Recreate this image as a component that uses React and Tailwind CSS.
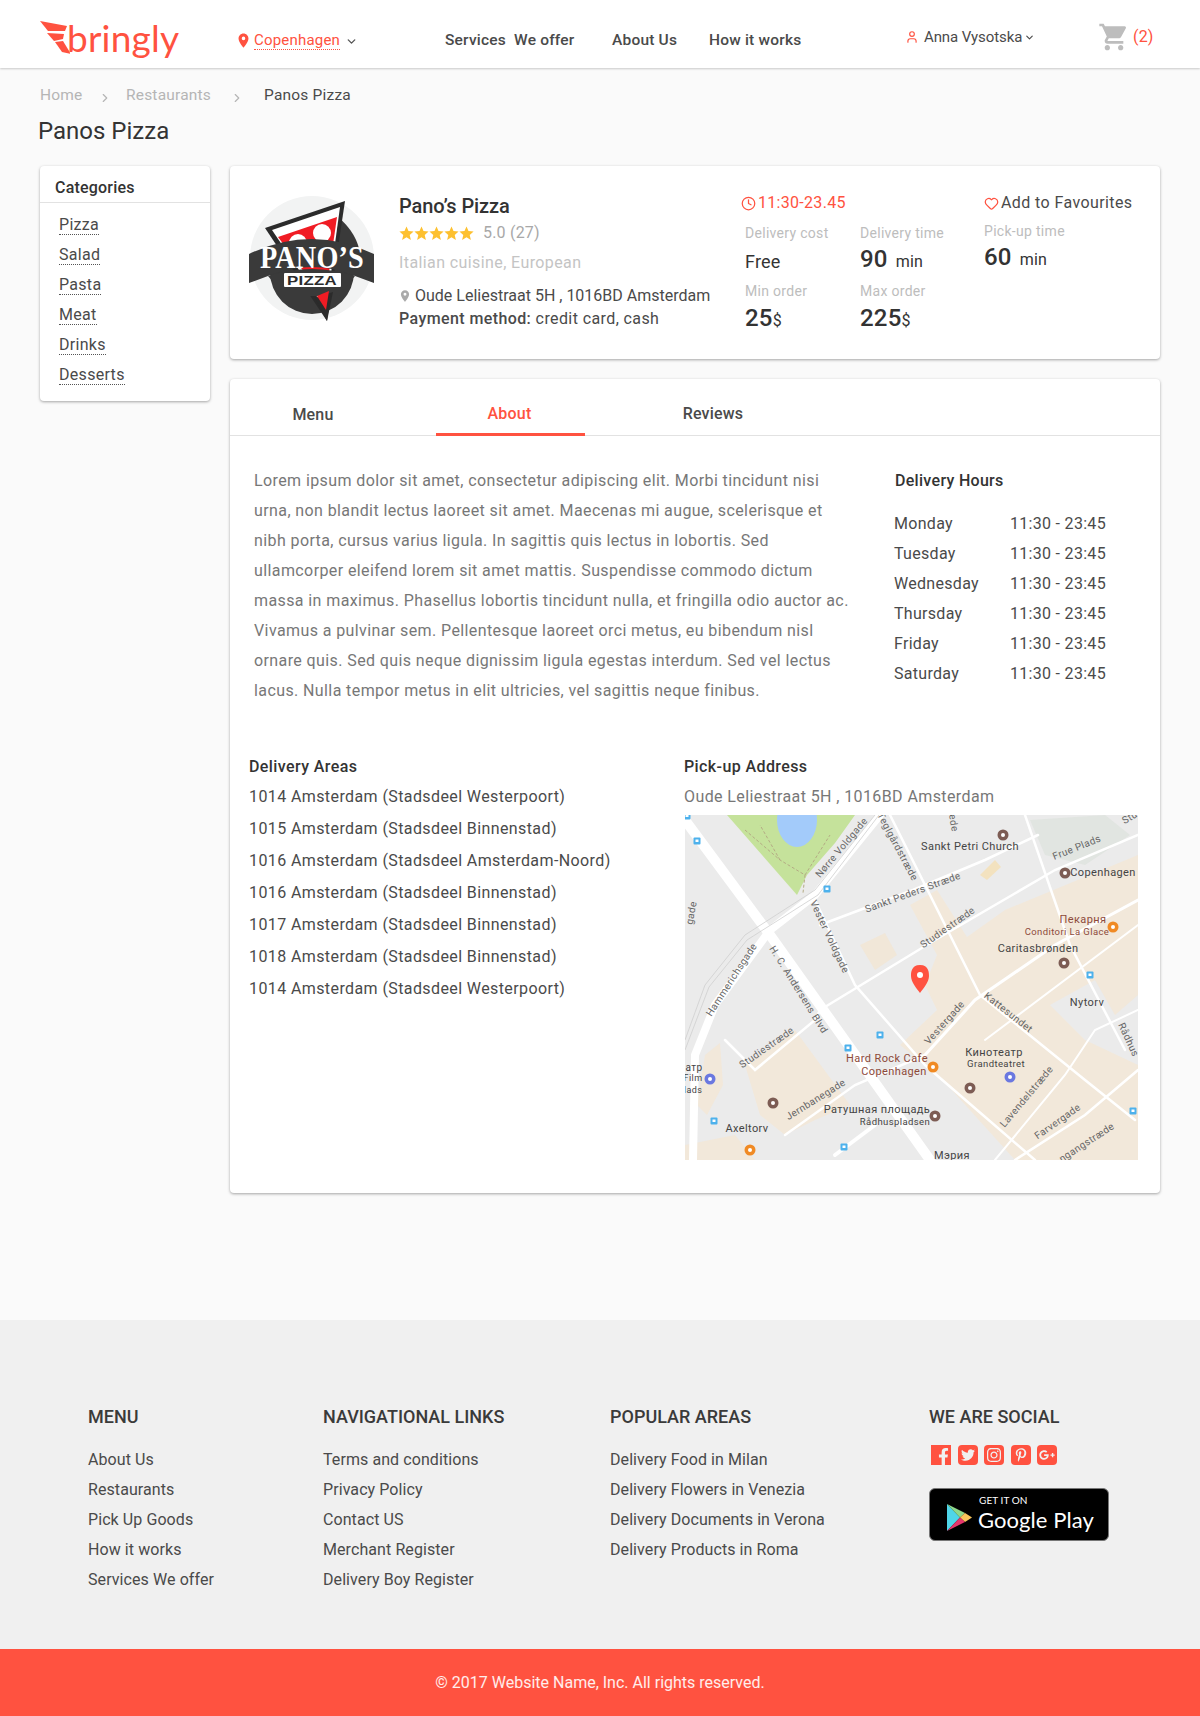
import React from 'react';
import { ChevronDown, ChevronRight, Clock, Heart, User } from 'lucide-react';
import { MdPlace, MdShoppingCart, MdStar } from 'react-icons/md';
import { FaFacebookF, FaTwitter, FaInstagram, FaPinterestP, FaGooglePlusG } from 'react-icons/fa';

const categories = ['Pizza', 'Salad', 'Pasta', 'Meat', 'Drinks', 'Desserts'];

const hours = [
  ['Monday', '11:30 - 23:45'],
  ['Tuesday', '11:30 - 23:45'],
  ['Wednesday', '11:30 - 23:45'],
  ['Thursday', '11:30 - 23:45'],
  ['Friday', '11:30 - 23:45'],
  ['Saturday', '11:30 - 23:45'],
];

const areas = [
  '1014 Amsterdam (Stadsdeel Westerpoort)',
  '1015 Amsterdam (Stadsdeel Binnenstad)',
  '1016 Amsterdam (Stadsdeel Amsterdam-Noord)',
  '1016 Amsterdam (Stadsdeel Binnenstad)',
  '1017 Amsterdam (Stadsdeel Binnenstad)',
  '1018 Amsterdam (Stadsdeel Binnenstad)',
  '1014 Amsterdam (Stadsdeel Westerpoort)',
];

const footerColumns = [
  { title: 'MENU', width: 'w-[235px]', links: ['About Us', 'Restaurants', 'Pick Up Goods', 'How it works', 'Services We offer'] },
  { title: 'NAVIGATIONAL LINKS', width: 'w-[287px]', links: ['Terms and conditions', 'Privacy Policy', 'Contact US', 'Merchant Register', 'Delivery Boy Register'] },
  { title: 'POPULAR AREAS', width: 'w-[319px]', links: ['Delivery Food in Milan', 'Delivery Flowers in Venezia', 'Delivery Documents in Verona', 'Delivery Products in Roma'] },
];

// Logo
function BringlyLogo() {
  return (
    <div className="flex items-center w-[197px] h-[58px] -mt-[2px]">
      <svg width="30" height="40" viewBox="0 0 30 40" className="shrink-0 -mt-1">
        <path d="M0 5 L27 10 L25 15 L8 15 Z" fill="#ff5240" />
        <path d="M7 17 L24 18 L23 23 L14 25 Z" fill="#ff5240" />
        <path d="M15 26 L23 25 L31 38 L22 36 Z" fill="#ff5240" />
      </svg>
      <span className="font-['Lato',sans-serif] text-[37px] leading-none text-[#ff5240] -ml-[3px] -mt-[2px]">bringly</span>
    </div>
  );
}

function PanosLogo() {
  return (
    <svg width="126" height="126" viewBox="0 0 126 126" className="shrink-0">
      <circle cx="63" cy="62" r="62" fill="#f2f3f3" />
      <path d="M88 20 Q118 45 110 80 L60 60 Z" fill="#3a3a3a" />
      <circle cx="63" cy="76" r="42" fill="#3a3a3a" />
      <path d="M96 5 L16 32 L78 125 Z" fill="#2b2b2b" />
      <path d="M91 11 L23 34 L77 114 Z" fill="#fff" />
      <path d="M88 21 L29 41 L76 104 Z" fill="#f01c24" />
      <circle cx="73" cy="37" r="9" fill="#fff" />
      <circle cx="49" cy="47" r="9" fill="#fff" />
      <path d="M0 58 Q63 28 125 58 L125 87 L106 80 Q63 62 19 80 L0 87 Z" fill="#3a3a3a" />
      <path d="M19 80 Q63 66 106 80 L90 100 L36 100 Z" fill="#3a3a3a" />
      <path d="M66 102 L84 96 L78 125 Z" fill="#2b2b2b" />
      <path d="M68 100 L80 95 L77 114 Z" fill="#f01c24" />
      <text x="63" y="72" textAnchor="middle" fontFamily="'Liberation Serif', serif" fontWeight="700" fontSize="31" fill="#fff" textLength="104" lengthAdjust="spacingAndGlyphs">PANO’S</text>
      <rect x="35" y="77" width="57" height="14" rx="1" fill="#fff" />
      <text x="63" y="88.5" textAnchor="middle" fontFamily="'Liberation Sans', sans-serif" fontWeight="700" fontSize="12" fill="#2b2b2b" textLength="50" lengthAdjust="spacingAndGlyphs">PIZZA</text>
    </svg>
  );
}

function Stat({ label, children, offset = 'mt-[2px]' }) {
  return (
    <div>
      <div className="text-sm leading-[18px] tracking-[0.3px] text-[#bdbdbd]">{label}</div>
      <div className={`h-7 flex items-baseline text-[#333] whitespace-nowrap ${offset}`}>{children}</div>
    </div>
  );
}

function MapLabel({ x, y, size = 10, fill = '#666', rotate = 0, children }) {
  return (
    <text
      x={x}
      y={y}
      fontSize={size}
      fill={fill}
      textAnchor="middle"
      dominantBaseline="middle"
      fontFamily="Roboto, sans-serif"
      transform={rotate ? `rotate(${rotate} ${x} ${y})` : undefined}
    >
      {children}
    </text>
  );
}

function MapPicture() {
  const labels = [
    { x: 285, y: 32, t: 'Sankt Petri Church', size: 11, fill: '#444' },
    { x: 418, y: 58, t: 'Copenhagen', size: 11, fill: '#444' },
    { x: 398, y: 105, t: 'Пекарня', size: 11, fill: '#8d4a3a' },
    { x: 382, y: 117, t: 'Conditori La Glace', size: 9.5, fill: '#8d4a3a' },
    { x: 353, y: 134, t: 'Caritasbrønden', size: 11, fill: '#444' },
    { x: 402, y: 188, t: 'Nytorv', size: 11, fill: '#444' },
    { x: 202, y: 244, t: 'Hard Rock Cafe', size: 11, fill: '#8d4a3a' },
    { x: 209, y: 257, t: 'Copenhagen', size: 11, fill: '#8d4a3a' },
    { x: 309, y: 238, t: 'Кинотеатр', size: 11, fill: '#444' },
    { x: 311, y: 249, t: 'Grandteatret', size: 9.5, fill: '#444' },
    { x: 192, y: 295, t: 'Ратушная площадь', size: 11, fill: '#444' },
    { x: 210, y: 307, t: 'Rådhuspladsen', size: 9.5, fill: '#444' },
    { x: 62, y: 314, t: 'Axeltorv', size: 11, fill: '#444' },
    { x: 267, y: 341, t: 'Мэрия', size: 11, fill: '#444' },
    { x: 9, y: 253, t: 'атр', size: 10, fill: '#444' },
    { x: 8, y: 264, t: 'Film', size: 9, fill: '#444' },
    { x: 8, y: 276, t: 'lads', size: 9, fill: '#444' },
    { x: 157, y: 33, t: 'Nørre Voldgade', rotate: -50 },
    { x: 212, y: 32, t: 'Teglgårdstræde', rotate: 62 },
    { x: 228, y: 78, t: 'Sankt Peders Stræde', rotate: -20 },
    { x: 263, y: 113, t: 'Studiestræde', rotate: -35 },
    { x: 392, y: 33, t: 'Frue Plads', rotate: -22 },
    { x: 144, y: 122, t: 'Vester Voldgade', rotate: 65 },
    { x: 113, y: 175, t: 'H. C. Andersens Blvd', rotate: 58 },
    { x: 47, y: 165, t: 'Hammerichsgade', rotate: -57 },
    { x: 260, y: 208, t: 'Vestergade', rotate: -48 },
    { x: 323, y: 198, t: 'Kattesundet', rotate: 38 },
    { x: 82, y: 233, t: 'Studiestræde', rotate: -35 },
    { x: 131, y: 285, t: 'Jernbanegade', rotate: -32 },
    { x: 342, y: 282, t: 'Lavendelstræde', rotate: -50 },
    { x: 373, y: 307, t: 'Farvergade', rotate: -35 },
    { x: 443, y: 225, t: 'Rådhus', rotate: 65 },
    { x: 402, y: 328, t: 'ngangstræde', rotate: -33 },
    { x: 268, y: 8, t: 'ede', rotate: 80 },
    { x: 7, y: 98, t: 'gade', rotate: -80 },
    { x: 445, y: 3, t: 'Stu', rotate: -30 },
  ];
  const stops = [[12, 26], [142, 74], [195, 220], [163, 233], [405, 160], [448, 296], [29, 306], [159, 332], [2, 1]];
  const pois = [
    [318, 20, '#7d5c54'], [380, 58, '#7d5c54'], [428, 112, '#f08a24'], [379, 148, '#7d5c54'],
    [248, 252, '#f08a24'], [325, 262, '#6b78e0'], [285, 273, '#7d5c54'], [250, 301, '#7d5c54'],
    [88, 288, '#7d5c54'], [25, 264, '#6b78e0'], [65, 335, '#f08a24'],
  ];
  return (
    <svg width="453" height="345" viewBox="0 0 453 345" className="block">
      <rect width="453" height="345" fill="#ebebeb" />
      {/* tan blocks */}
      <path d="M225 90 L252 75 L282 122 L320 95 L453 40 L453 345 L330 345 L255 262 L215 230 L252 195 L240 170 L252 140 Z" fill="#f2e8da" />
      <path d="M365 190 L410 165 L430 200 L453 180 L453 250 L400 225 Z" fill="#ebebeb" />
      <path d="M60 250 L110 215 L165 290 L130 305 L100 320 L75 300 Z" fill="#f2e8da" />
      <path d="M20 240 L35 228 L38 270 L22 300 L12 290 Z" fill="#f2e8da" />
      <path d="M0 330 L50 320 L70 345 L0 345 Z" fill="#f2e8da" />
      <path d="M175 130 L200 118 L212 140 L190 155 Z" fill="#f1e7d8" />
      <path d="M345 5 L420 0 L445 20 L400 50 L360 40 Z" fill="#e1e5e1" />
      <path d="M295 60 L310 45 L316 52 L302 65 Z" fill="#f3e2bf" />
      {/* park and lake */}
      <path d="M42 0 L170 0 L150 28 L122 60 L112 80 Z" fill="#c5e29b" />
      <ellipse cx="112" cy="5" rx="20" ry="27" fill="#a3cbfa" />
      <path d="M60 15 L95 45 L120 60 L118 78 M120 60 L145 20 M95 45 L75 10" fill="none" stroke="#b4ab84" strokeWidth="1" strokeDasharray="3 2" />
      {/* roads */}
      <g fill="none" stroke="#fff" strokeLinecap="round">
        <path d="M0 5 L85 120 L245 345" strokeWidth="10" />
        <path d="M195 0 L130 80 L85 115 L30 190 L10 240 L8 345" strokeWidth="8" />
        <path d="M135 110 L228 75 L300 45 L353 20" strokeWidth="2.5" />
        <path d="M135 195 L250 125 L370 55 L453 20" strokeWidth="2.5" />
        <path d="M130 85 L170 170 L240 250 L350 345" strokeWidth="2.5" />
        <path d="M205 0 L295 180 L400 265 L450 305" strokeWidth="2.5" />
        <path d="M240 240 L290 185 L370 130 L453 85" strokeWidth="3" />
        <path d="M340 0 L385 130 L440 235" strokeWidth="2.5" />
        <path d="M300 225 L453 110" strokeWidth="2" />
        <path d="M100 320 L170 270 L240 240" strokeWidth="2.5" />
        <path d="M310 345 L380 260 L410 215 L453 195" strokeWidth="2" />
        <path d="M330 345 L400 300 L453 255" strokeWidth="2.5" />
        <path d="M40 225 L70 255 L130 205 L135 195" strokeWidth="2.5" />
        <path d="M150 340 L190 310" strokeWidth="4" />
      </g>
      <g fill="none" stroke="#cfcfcf" strokeWidth="0.8">
        <path d="M0 225 L20 170 L60 120 L130 75 L190 0" />
        <path d="M0 235 L24 172 L62 125 L133 80 L194 0" />
      </g>
      {stops.map(([x, y], i) => (
        <g key={i}>
          <rect x={x - 3.5} y={y - 3.5} width="7" height="7" rx="1" fill="#4db1ec" />
          <rect x={x - 1.5} y={y - 1.5} width="3" height="2.5" fill="#fff" />
        </g>
      ))}
      {pois.map(([x, y, c], i) => (
        <g key={i}>
          <circle cx={x} cy={y} r="5.5" fill={c} />
          <circle cx={x} cy={y} r="2" fill="#fff" />
        </g>
      ))}
      {labels.map((l, i) => (
        <MapLabel key={i} x={l.x} y={l.y} size={l.size} fill={l.fill} rotate={l.rotate}>{l.t}</MapLabel>
      ))}
      {/* pin */}
      <path d="M235 150 C226 150 226 158 226 161 C226 167 232 174 235 178 C238 174 244 167 244 161 C244 158 244 150 235 150 Z" fill="#ff5240" />
      <circle cx="235" cy="160" r="3" fill="#fff" />
    </svg>
  );
}

function GooglePlayBadge() {
  return (
    <div className="flex items-center w-[180px] h-[53px] bg-black rounded-md border border-[#777] pl-[17px] text-white">
      <svg width="25" height="27" viewBox="0 0 25 27" className="shrink-0 mt-[6px]">
        <path d="M0 0 L13 13.5 L0 27 Z" fill="#4fd5e8" />
        <path d="M0 0 L18 9 L13 13.5 Z" fill="#8ed98a" />
        <path d="M18 9 L25 13.5 L18 18 L13 13.5 Z" fill="#f9c45b" />
        <path d="M0 27 L13 13.5 L18 18 Z" fill="#e5366c" />
      </svg>
      <div className="ml-[6px] -mt-[2px] font-['Lato',sans-serif]">
        <div className="text-[10px] leading-3 ml-[1px]">GET IT ON</div>
        <div className="text-[22px] leading-[27px] whitespace-nowrap">Google Play</div>
      </div>
    </div>
  );
}

function SocialIcon({ children, square }) {
  return (
    <span className={`flex items-center justify-center w-5 h-5 overflow-hidden bg-[#ff5240] text-[#f0f0f0] ${square ? '' : 'rounded-sm'}`}>
      {children}
    </span>
  );
}

export default function App() {
  return (
    <div className="w-[1200px] min-h-[1716px] bg-[#fafafa] font-['Roboto',sans-serif] text-base text-[#4a4a4a] tracking-[0.2px]">
      {/* Header */}
      <header className="flex items-center h-[68px] pl-10 pt-[10px] bg-white shadow-[0_1px_2px_rgba(0,0,0,0.2)]">
        <BringlyLogo />
        <div className="flex items-center w-[208px] text-[#ff5240] mt-[2px]">
          <MdPlace size={17} className="-ml-[2px]" />
          <span className="ml-[2px] text-[15px] leading-[18px] border-b border-dotted border-[#ff5240]">Copenhagen</span>
          <ChevronDown size={13} strokeWidth={2.5} className="ml-[5px] mt-[3px] text-[#555]" />
        </div>
        <nav className="flex items-center mt-[3px] font-medium text-[15.5px] w-[460px]">
          <span className="w-[167px] whitespace-nowrap">Services &nbsp;We offer</span>
          <span className="w-[97px]">About Us</span>
          <span>How it works</span>
        </nav>
        <div className="flex items-center w-[193px] -mt-1 text-[15px]">
          <User size={14} className="text-[#ff5240]" />
          <span className="ml-[5px] tracking-[-0.1px]">Anna Vysotska</span>
          <ChevronDown size={11} strokeWidth={2.5} className="ml-[2px]" />
        </div>
        <div className="flex items-center -mt-1">
          <MdShoppingCart size={32} className="text-[#bdbdbd]" />
          <span className="ml-[3px] text-[#ff5240]">(2)</span>
        </div>
      </header>

      {/* Breadcrumb */}
      <div className="flex items-center h-[56px] pl-10 text-[15.5px]">
        <span className="w-[58px] text-[#b5b5b5]">Home</span>
        <ChevronRight size={14} className="text-[#b5b5b5] mt-[3px]" />
        <span className="ml-[14px] w-[104px] text-[#b5b5b5]">Restaurants</span>
        <ChevronRight size={14} className="text-[#b5b5b5] mt-[3px]" />
        <span className="ml-5">Panos Pizza</span>
      </div>
      <h1 className="pl-[38px] h-[49px] -mt-[7px] text-2xl leading-7 font-normal text-[#333] tracking-normal">Panos Pizza</h1>

      {/* Content */}
      <div className="flex gap-5 px-10">
        <aside className="w-[170px] h-[235px] bg-white shadow-[0_1px_3px_rgba(0,0,0,0.35)] rounded-sm">
          <div className="h-[37px] pl-[15px] pt-[11px] leading-[22px] font-medium text-[#333] border-b border-[#e2e2e2]">Categories</div>
          <ul className="pl-[19px] pt-[7px] tracking-[0.3px]">
            {categories.map((c) => (
              <li key={c} className="h-[30px] flex items-center">
                <span className="leading-[18px] border-b border-dotted border-[#555]">{c}</span>
              </li>
            ))}
          </ul>
        </aside>

        <main className="w-[930px]">
          {/* Restaurant card */}
          <section className="flex h-[193px] bg-white rounded-sm shadow-[0_1px_3px_rgba(0,0,0,0.35)]">
            <div className="pl-[19px] pt-[30px] pr-6">
              <PanosLogo />
            </div>
            <div className="w-[343px] pt-[28px]">
              <h2 className="text-xl leading-6 font-medium text-[#333] tracking-[-0.1px]">Pano’s Pizza</h2>
              <div className="flex items-center h-5 mt-[5px]">
                <span className="flex text-[#fdc02f] -ml-[1px] -space-x-[2px]">
                  {[0, 1, 2, 3, 4].map((i) => <MdStar key={i} size={17} />)}
                </span>
                <span className="ml-2 text-[#a8a8a8]">5.0 (27)</span>
              </div>
              <div className="h-5 leading-5 mt-[10px] text-[#c4c4c4] tracking-[0.4px]">Italian cuisine, European</div>
              <div className="flex items-center h-5 mt-[13px] whitespace-nowrap tracking-normal">
                <MdPlace size={14} className="text-[#aaa] -ml-[1px]" />
                <span className="ml-[3px]">Oude Leliestraat 5H , 1016BD Amsterdam</span>
              </div>
              <div className="h-5 leading-5 mt-[3px] whitespace-nowrap tracking-[0.4px]">
                <span className="font-medium">Payment method:</span> credit card, cash
              </div>
            </div>
            <div className="w-[242px] pt-[27px]">
              <div className="flex items-center h-5 text-[#ff5240] -ml-[1px] tracking-[0.3px]">
                <Clock size={15} strokeWidth={2} />
                <span className="ml-[2px]">11:30-23.45</span>
              </div>
              <div className="grid grid-cols-[115px_115px] gap-y-[6px] mt-[11px] ml-[3px]">
                <Stat label="Delivery cost" offset="mt-[6px]"><span className="text-lg">Free</span></Stat>
                <Stat label="Delivery time" offset="mt-[1px]"><span className="text-2xl font-medium">90</span><span className="ml-2">min</span></Stat>
                <Stat label="Min order"><span className="text-2xl font-medium">25</span><span>$</span></Stat>
                <Stat label="Max order"><span className="text-2xl font-medium">225</span><span>$</span></Stat>
              </div>
            </div>
            <div className="pt-[27px]">
              <div className="flex items-center h-5 whitespace-nowrap tracking-[0.4px]">
                <Heart size={15} strokeWidth={2} className="text-[#ff5240]" />
                <span className="ml-[2px]">Add to Favourites</span>
              </div>
              <div className="mt-[9px] text-sm leading-[18px] text-[#bdbdbd] tracking-[0.3px]">Pick-up time</div>
              <div className="mt-[1px] h-7 flex items-baseline text-[#333]">
                <span className="text-2xl font-medium">60</span><span className="ml-2">min</span>
              </div>
            </div>
          </section>

          {/* Tabs card */}
          <section className="mt-5 h-[814px] bg-white rounded-sm shadow-[0_1px_3px_rgba(0,0,0,0.35)]">
            <div className="flex h-[57px] border-b border-[#e2e2e2] font-medium">
              <div className="w-[166px] flex items-center justify-center pt-[15px]">Menu</div>
              <div className="ml-10 w-[149px] flex items-center justify-center pt-[15px] pr-[2px] text-[#ff5240] border-b-[3px] border-[#ff5240] h-[57px]">About</div>
              <div className="w-[256px] flex items-center justify-center pt-[14px]">Reviews</div>
            </div>

            <div className="flex pl-6 pt-[30px]">
              <p className="w-[598px] leading-[30px] text-[#777] tracking-[0.4px]">
                Lorem ipsum dolor sit amet, consectetur adipiscing elit. Morbi tincidunt nisi urna, non blandit lectus laoreet sit amet. Maecenas mi augue, scelerisque et nibh porta, cursus varius ligula. In sagittis quis lectus in lobortis. Sed ullamcorper eleifend lorem sit amet mattis. Suspendisse commodo dictum massa in maximus. Phasellus lobortis tincidunt nulla, et fringilla odio auctor ac. Vivamus a pulvinar sem. Pellentesque laoreet orci metus, eu bibendum nisl ornare quis. Sed quis neque dignissim ligula egestas interdum. Sed vel lectus lacus. Nulla tempor metus in elit ultricies, vel sagittis neque finibus.
              </p>
              <div className="ml-[42px] tracking-[0.3px]">
                <h3 className="h-[43px] pl-[1px] leading-[30px] font-medium text-[#333]">Delivery Hours</h3>
                {hours.map(([day, time]) => (
                  <div key={day} className="flex h-[30px] items-center">
                    <span className="w-[116px] whitespace-nowrap">{day}</span>
                    <span className="whitespace-nowrap">{time}</span>
                  </div>
                ))}
              </div>
            </div>

            <div className="flex mt-[50px] pl-[19px] tracking-[0.4px]">
              <div className="w-[435px]">
                <h3 className="h-[22px] leading-[22px] font-medium text-[#333]">Delivery Areas</h3>
                <ul className="mt-[3px]">
                  {areas.map((a, i) => (
                    <li key={i} className="h-8 flex items-center whitespace-nowrap">{a}</li>
                  ))}
                </ul>
              </div>
              <div>
                <h3 className="h-[22px] leading-[22px] font-medium text-[#333]">Pick-up Address</h3>
                <div className="mt-[3px] h-8 flex items-center text-[#777] whitespace-nowrap">Oude Leliestraat 5H , 1016BD Amsterdam</div>
                <div className="ml-[1px] mt-[2px]">
                  <MapPicture />
                </div>
              </div>
            </div>
          </section>
        </main>
      </div>

      {/* Footer */}
      <footer className="mt-[127px] h-[329px] bg-[#f0f0f0] flex pl-[88px] pt-[85px] tracking-[0.08px]">
        {footerColumns.map((col) => (
          <div key={col.title} className={col.width}>
            <h4 className="text-lg leading-6 font-medium text-[#3a3a3a] tracking-normal">{col.title}</h4>
            <ul className="mt-4">
              {col.links.map((l) => (
                <li key={l} className="h-[30px] flex items-center">{l}</li>
              ))}
            </ul>
          </div>
        ))}
        <div>
          <h4 className="text-lg leading-6 font-medium text-[#3a3a3a] tracking-normal">WE ARE SOCIAL</h4>
          <div className="flex gap-[6.5px] mt-[16px] ml-[2px]">
            <SocialIcon square><FaFacebookF size={17} className="mt-[3px] ml-[5px]" /></SocialIcon>
            <SocialIcon><FaTwitter size={14} /></SocialIcon>
            <SocialIcon><FaInstagram size={16} /></SocialIcon>
            <SocialIcon><FaPinterestP size={14} /></SocialIcon>
            <SocialIcon><FaGooglePlusG size={16} /></SocialIcon>
          </div>
          <div className="mt-[23px]">
            <GooglePlayBadge />
          </div>
        </div>
      </footer>
      <div className="h-[67px] flex items-center justify-center bg-[#ff5240] text-white/90 tracking-normal">
        © 2017 Website Name, Inc. All rights reserved.
      </div>
    </div>
  );
}
